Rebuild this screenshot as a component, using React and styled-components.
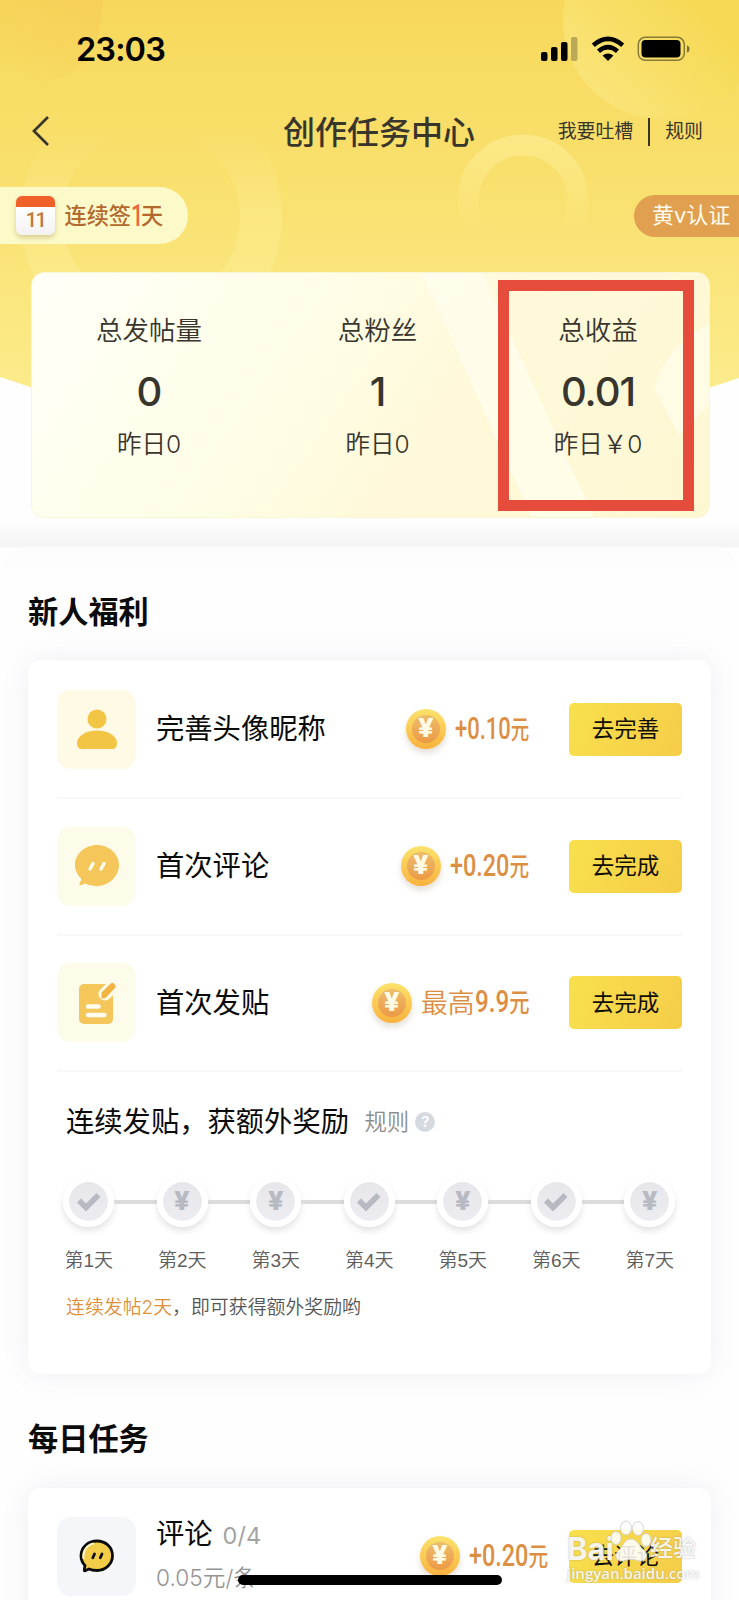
import React from "react";
import styled, { createGlobalStyle } from "styled-components";

const GlobalStyle = createGlobalStyle`
  * {
    box-sizing: border-box;
  }
  body {
    margin: 0;
    background: #fefefe;
    font-family: Inter, "Noto Sans CJK SC", sans-serif;
    color: #0b0b0b;
  }
`;

const Page = styled.div`
  position: relative;
  width: 739px;
  height: 1600px;
  overflow: hidden;
`;

const Header = styled.header`
  position: relative;
  height: 518px;
`;

const Backdrop = styled.svg`
  position: absolute;
  top: 0;
  left: 0;
  z-index: -1;
`;

const StatusBar = styled.div`
  display: flex;
  align-items: center;
  justify-content: space-between;
  height: 98px;
  padding: 0 49px 0 76px;
`;

const Time = styled.span`
  font-size: 32.5px;
  font-weight: 600;
  letter-spacing: -0.9px;
  color: #000;
`;

const NavBar = styled.nav`
  display: grid;
  grid-template-columns: 251px 192px 1fr;
  align-items: center;
  height: 66px;
  padding: 0 36px 0 32px;
  color: #38352b;
`;

const Title = styled.h1`
  margin: 3px 0 0;
  font-size: 32px;
  font-weight: 500;
  line-height: 40px;
  white-space: nowrap;
`;

const NavLinks = styled.div`
  display: flex;
  align-items: center;
  justify-content: flex-end;
  padding-top: 1px;
  font-size: 18.9px;
  line-height: 28px;
`;

const Divider = styled.span`
  width: 2px;
  height: 28px;
  margin: 0 15px;
  background: #38352b;
`;

const Pills = styled.div`
  display: flex;
  align-items: center;
  justify-content: space-between;
  height: 57px;
  margin-top: 23px;
`;

const SignPill = styled.div`
  display: flex;
  align-items: center;
  gap: 9.5px;
  width: 187.5px;
  height: 57px;
  padding-left: 16px;
  border-radius: 0 29px 29px 0;
  background: #fdfac9;
  color: #b3682e;
  font-size: 22.2px;
  font-weight: 500;
  white-space: nowrap;
`;

const SignText = styled.span`
  display: flex;
  align-items: center;
  line-height: 30px;
`;

const SignCount = styled.b`
  width: 10px;
  font-family: Roboto, sans-serif;
  font-size: 31px;
  font-weight: 500;
  color: #e8693f;
  transform: scaleX(0.7);
  transform-origin: left;
`;

const Calendar = styled.div`
  width: 39px;
  height: 39px;
  border-radius: 6px;
  border-top: 11px solid #ef6129;
  background: linear-gradient(#fff, #f4f1f1);
  box-shadow: 0 3px 5px rgba(150, 130, 40, 0.35);
  color: #c07a35;
  font-family: Roboto, sans-serif;
  font-size: 20px;
  font-weight: 500;
  line-height: 26px;
  letter-spacing: -1.5px;
  text-align: center;
`;

const VerifyPill = styled.div`
  width: 105px;
  height: 42px;
  padding-left: 18px;
  border-radius: 21px 0 0 21px;
  background: #e1a04f;
  color: #fffdf0;
  font-size: 22px;
  line-height: 41px;
  white-space: nowrap;
`;

const StatsCard = styled.section`
  position: relative;
  display: grid;
  grid-template-columns: 234px 223px 218px;
  width: 679px;
  height: 246px;
  margin: 28px 0 0 31px;
  overflow: hidden;
  border: 1px solid #fbf5d4;
  border-radius: 13px;
  background: linear-gradient(125deg, #fffff8 0%, #fffeea 32%, #fef9da 60%, #fdf7d2 100%);
`;

const Shine = styled.svg`
  position: absolute;
  top: 0;
  left: 0;
`;

const Stat = styled.div`
  position: relative;
  display: flex;
  flex-direction: column;
  align-items: center;
  padding-top: 38px;
  color: #38352d;
`;

const StatLabel = styled.span`
  font-size: 26.5px;
  font-weight: 350;
  line-height: 38px;
`;

const StatValue = styled.span`
  margin-top: 16px;
  font-size: 40px;
  font-weight: 500;
  line-height: 54px;
  letter-spacing: -1px;
`;

const StatNote = styled.span`
  margin-top: 7px;
  font-size: 24.5px;
  font-weight: 350;
  line-height: 36px;
`;

const Highlight = styled.div`
  position: absolute;
  top: 280px;
  left: 498px;
  width: 196px;
  height: 231px;
  border: 11.5px solid #e64c3b;
`;

const Body = styled.main`
  margin: 0 4px;
  padding: 0 24px;
`;

const Lip = styled.div`
  height: 64px;
  margin: 0 -28px;
  padding-top: 29px;
  background: linear-gradient(#fff, #f4f4f4 29px, #fff 30px);
`;

const LipEdge = styled.div`
  height: 35px;
  border-radius: 26px 26px 0 0;
  background: linear-gradient(#fcfcfc, #fefefe);
`;

const SectionTitle = styled.h2`
  margin: ${(props) => props.$top}px 0 0;
  font-size: 30.2px;
  font-weight: 700;
  line-height: 44px;
  color: #0b0b0b;
`;

const Card = styled.section`
  width: 683px;
  height: ${(props) => props.$height}px;
  margin-top: ${(props) => props.$top}px;
  padding: ${(props) => props.$pad || 0}px 29px 0;
  border-radius: 13px;
  background: #fff;
  box-shadow: 0 0 28px rgba(80, 85, 130, 0.09);
`;

const TaskRow = styled.div`
  display: flex;
  align-items: center;
  height: ${(props) => props.$height || 136.8}px;
  border-bottom: ${(props) => (props.$last ? "none" : "2px solid #f8f8fa")};
`;

const IconBox = styled.div`
  display: flex;
  align-items: center;
  justify-content: center;
  width: 79px;
  height: 79px;
  flex: none;
  border-radius: 14px;
  background: ${(props) => props.$bg};
`;

const TaskInfo = styled.div`
  flex: 1;
  margin-left: 20px;
  white-space: nowrap;
`;

const TaskName = styled.div`
  font-size: 28.3px;
  line-height: 42px;
`;

const Progress = styled.span`
  margin-left: 10px;
  font-size: 23.5px;
  color: #a3a3a3;
`;

const TaskRate = styled.div`
  font-size: 22.7px;
  font-weight: 350;
  line-height: 42px;
  color: #959595;
`;

const Reward = styled.div`
  display: flex;
  align-items: center;
  margin-right: ${(props) => props.$gap}px;
  color: #dc8f43;
  line-height: 40px;
`;

const CoinFace = styled.span`
  display: flex;
  align-items: center;
  justify-content: center;
  width: 40px;
  height: 40px;
  margin-right: 9px;
  flex: none;
  border: 6px solid transparent;
  border-radius: 50%;
  background: linear-gradient(#edbd6c, #ec9a45) padding-box,
    linear-gradient(#fbe36c, #fac852 55%, #f8b13e) border-box;
  box-shadow: 0 4px 6px rgba(120, 90, 50, 0.2);
  color: #fffbe6;
`;

const Yen = styled.span`
  font-family: Roboto, sans-serif;
  font-size: 25px;
  font-weight: 900;
  line-height: 28px;
  transform: scaleX(1.12);
`;

const RewardPrefix = styled.span`
  font-size: 26.8px;
  font-weight: 350;
`;

const Amount = styled.span`
  width: ${(props) => props.$width}px;
  font-family: Roboto, "Noto Sans CJK SC", sans-serif;
  font-size: 31px;
  font-weight: 500;
  white-space: nowrap;

  span {
    display: inline-block;
    transform: scaleX(${(props) => props.$squeeze});
    transform-origin: left;
  }
  small {
    font-size: 26px;
  }
`;

const GoButton = styled.button`
  width: 113px;
  height: 53px;
  padding: 0;
  flex: none;
  border: none;
  border-radius: 5px;
  background: linear-gradient(110deg, #f8e04c, #f6cd49);
  color: #0f0d05;
  font-family: inherit;
  font-size: 22.5px;
  line-height: 52px;
`;

const StreakTitle = styled.div`
  display: flex;
  align-items: center;
  margin: 29px 0 0 9px;
  font-size: 28.3px;
  line-height: 42px;
  white-space: nowrap;
`;

const Rules = styled.span`
  margin-left: 15.5px;
  font-size: 22.4px;
  font-weight: 350;
  color: #8d8d8d;
`;

const Help = styled.span`
  width: 20px;
  height: 20px;
  margin-left: 6px;
  border-radius: 50%;
  background: #d5dae0;
  color: #fff;
  font-size: 15px;
  font-weight: 600;
  line-height: 20px;
  text-align: center;
`;

const Track = styled.div`
  display: flex;
  align-items: center;
  margin: 33px 0 0 6px;
`;

const Step = styled.span`
  display: flex;
  align-items: center;
  justify-content: center;
  width: 51px;
  height: 51px;
  flex: none;
  border: 6px solid #fff;
  border-radius: 50%;
  background: linear-gradient(#e6e6eb, #ececf1);
  background-clip: padding-box;
  box-shadow: 0 4px 6px rgba(60, 60, 70, 0.14);
  color: #b7b9c3;
`;

const Link = styled.span`
  width: 42.5px;
  height: 4px;
  background: #dcdcdc;
`;

const Days = styled.div`
  display: grid;
  grid-template-columns: repeat(7, 93.5px);
  margin: 19px 0 0 -15px;
  font-family: "Liberation Sans", "Noto Sans CJK SC", sans-serif;
  font-size: 19px;
  font-weight: 350;
  line-height: 30px;
  color: #5f5f5f;
  text-align: center;
`;

const Hint = styled.p`
  margin: 17px 0 0 9px;
  font-size: 18.9px;
  font-weight: 350;
  line-height: 30px;
  color: #555;

  em {
    font-style: normal;
    color: #dc9138;
  }
`;

const HomeBar = styled.div`
  position: absolute;
  top: 1575px;
  left: 238px;
  width: 264px;
  height: 10px;
  border-radius: 5px;
  background: #000;
`;

const Watermark = styled.div`
  position: absolute;
  top: 1518px;
  left: 567px;
  width: 135px;
  color: rgba(255, 255, 255, 0.88);
  text-shadow: 0 0 2px rgba(130, 130, 130, 0.6);
  white-space: nowrap;
`;

const Brand = styled.div`
  display: flex;
  align-items: flex-end;
  height: 46px;
  font-size: 31px;
  font-weight: 700;
  line-height: 31px;

  svg {
    margin: 0 -2px 1px -4px;
  }
  small {
    font-size: 23px;
    font-weight: 500;
  }
`;

const Site = styled.div`
  margin-top: -1px;
  font-family: "Open Sans", sans-serif;
  font-size: 15px;
  font-weight: 600;
  line-height: 20px;
`;

const rookieTasks = [
  { name: "完善头像昵称", icon: UserIcon, bg: "#fffae6", amount: "+0.10", width: 75, squeeze: 0.71, action: "去完善" },
  { name: "首次评论", icon: ChatIcon, bg: "#fdfbe9", amount: "+0.20", width: 80, squeeze: 0.755, action: "去完成" },
  {
    name: "首次发贴",
    icon: NoteIcon,
    bg: "#fdfbe9",
    prefix: "最高",
    amount: "9.9",
    width: 55,
    squeeze: 0.78,
    action: "去完成",
  },
];

const steps = ["check", "yen", "yen", "check", "yen", "check", "yen"];

function UserIcon() {
  return (
    <svg width="42" height="42" viewBox="0 0 42 42" fill="#f3c544">
      <circle cx="21" cy="11" r="9.5" />
      <path d="M1 35C1 28 10 22.5 21 22.5S41 28 41 35Q41 41 36 41H6Q1 41 1 35Z" />
    </svg>
  );
}

function ChatIcon() {
  return (
    <svg width="46" height="44" viewBox="0 0 46 44">
      <path
        d="M23 1C35 1 45 10 45 21S35 42 23 42C18 42 14 41 11 39.5L6 41.5Q5 42 5.500 40L7.500 35C3.500 31 1 26.500 1 21C1 10 11 1 23 1Z"
        fill="#f5c65a"
      />
      <path d="M19 19.500L16 25M30 19.500L27 25" stroke="#fffdf0" strokeWidth="3.400" strokeLinecap="round" />
    </svg>
  );
}

function NoteIcon() {
  return (
    <svg width="40" height="44" viewBox="0 0 40 44">
      <rect x="2" y="3" width="34" height="40" rx="5" fill="#f5c65a" />
      <path d="M28 13L37 4" stroke="#fdfbe9" strokeWidth="13" strokeLinecap="round" />
      <path d="M24.500 17.500V11.500L34 2.300Q35.300 1.200 36.500 2.300L38.300 4.200Q39.500 5.500 38.200 6.800L29.500 16Q28 17.500 26 17.500Z" fill="#f0b443" />
      <path d="M11 25.500H21.500M11 34H27.500" stroke="#fffdf0" strokeWidth="4.500" strokeLinecap="round" />
    </svg>
  );
}

function DailyChatIcon() {
  return (
    <svg width="36" height="34" viewBox="0 0 36 34">
      <path
        d="M18 2C27 2 33.500 8.500 33.500 16.500S27 31.500 18 31.500C14.500 31.500 12 31 10 30L6 31.800Q5 32 5.300 30.500L6 26.500C3.500 24 2 20.500 2 16.500C2 8.500 9 2 18 2Z"
        fill="#f3cd48"
        stroke="#0b0b0b"
        strokeWidth="2.800"
        strokeLinejoin="round"
      />
      <path d="M4.500 20C3.500 11 9 5 15 4.500" stroke="#fff6cf" strokeWidth="2" fill="none" />
      <path d="M15.500 15L13.800 18.800M23 15L21.300 18.800" stroke="#0b0b0b" strokeWidth="2.800" strokeLinecap="round" />
    </svg>
  );
}

function StatusIcons() {
  return (
    <svg width="149" height="26" viewBox="0 0 149 26">
      <rect x="0" y="16" width="6.500" height="9" rx="2" />
      <rect x="10" y="11" width="6.500" height="14" rx="2" />
      <rect x="20" y="6" width="6.500" height="19" rx="2" />
      <rect x="30" y="1" width="6.500" height="24" rx="2" opacity="0.25" />
      <g fill="none" stroke="#000" strokeWidth="4.600">
        <path d="M52.300 9.200Q67 -3.300 81.700 9.200" />
        <path d="M57.500 15.200Q67 7 76.500 15.200" />
      </g>
      <path d="M61.500 19.500Q67 15.500 72.500 19.500L67 25Z" />
      <rect x="97.300" y="1.300" width="46" height="23" rx="7" fill="none" stroke="#000" strokeOpacity="0.450" strokeWidth="1.500" />
      <rect x="100.500" y="4" width="39" height="17.500" rx="4" />
      <path d="M146 9.500Q148.500 10 148.500 13T146 16.500Z" opacity="0.500" />
    </svg>
  );
}

function CalendarBadge() {
  return <Calendar>11</Calendar>;
}

function Coin() {
  return (
    <CoinFace>
      <Yen>¥</Yen>
    </CoinFace>
  );
}

function RewardAmount({ value, width, squeeze }) {
  return (
    <Amount $width={width} $squeeze={squeeze}>
      <span>
        {value}
        <small>元</small>
      </span>
    </Amount>
  );
}

function HeaderArt() {
  return (
    <Backdrop width="739" height="420" viewBox="0 0 739 420">
      <defs>
        <linearGradient id="sky" x1="0" y1="0" x2="0" y2="1">
          <stop offset="0" stopColor="#f7d85b" />
          <stop offset="0.4" stopColor="#f9e06d" />
          <stop offset="1" stopColor="#fcee93" />
        </linearGradient>
        <linearGradient id="orb" x1="0.1" y1="0.9" x2="0.7" y2="0.4">
          <stop offset="0" stopColor="#fbe883" />
          <stop offset="1" stopColor="#f6d850" />
        </linearGradient>
        <linearGradient id="glow" x1="1" y1="0" x2="0.3" y2="1">
          <stop offset="0" stopColor="#f6cc57" />
          <stop offset="1" stopColor="#f6cc57" stopOpacity="0" />
        </linearGradient>
        <linearGradient id="ring" x1="0" y1="0" x2="0" y2="1">
          <stop offset="0" stopColor="#fff5a8" stopOpacity="0.45" />
          <stop offset="0.8" stopColor="#fff5a8" stopOpacity="0" />
        </linearGradient>
        <linearGradient id="bigRing" x1="0" y1="0" x2="0" y2="1">
          <stop offset="0.1" stopColor="#fff3a5" stopOpacity="0" />
          <stop offset="0.5" stopColor="#fff3a5" stopOpacity="0.3" />
        </linearGradient>
      </defs>
      <path d="M0 0H739V378Q560 440 370 440T0 377Z" fill="url(#sky)" />
      <path d="M0 0H103C103 45 80 82 40 82Q18 82 0 70Z" fill="url(#glow)" opacity="0.7" />
      <circle cx="662" cy="20" r="99" fill="url(#orb)" opacity="0.75" />
      <circle cx="523" cy="200" r="55" fill="none" stroke="url(#ring)" strokeWidth="21" />
      <circle cx="151" cy="217" r="110" fill="none" stroke="url(#bigRing)" strokeWidth="42" />
    </Backdrop>
  );
}

export default function App() {
  return (
    <Page>
      <GlobalStyle />
      <Header>
        <HeaderArt />
        <StatusBar>
          <Time>23:03</Time>
          <StatusIcons />
        </StatusBar>
        <NavBar>
          <svg width="18" height="32" viewBox="0 0 18 32" fill="none">
            <path d="M16 2L2 16L16 30" stroke="#38352b" strokeWidth="2.700" />
          </svg>
          <Title>创作任务中心</Title>
          <NavLinks>
            我要吐槽
            <Divider />
            规则
          </NavLinks>
        </NavBar>
        <Pills>
          <SignPill>
            <CalendarBadge />
            <SignText>
              连续签<SignCount>1</SignCount>天
            </SignText>
          </SignPill>
          <VerifyPill>黄v认证</VerifyPill>
        </Pills>
        <StatsCard>
          <Shine width="679" height="246" viewBox="0 0 679 246">
            <path d="M390 0H450L563 246H500Z" fill="#fffef0" opacity="0.7" />
            <path d="M679 50Q635 70 622 115L647 163L679 130Z" fill="#fffff5" opacity="0.5" />
          </Shine>
          <Stat>
            <StatLabel>总发帖量</StatLabel>
            <StatValue>0</StatValue>
            <StatNote>昨日0</StatNote>
          </Stat>
          <Stat>
            <StatLabel>总粉丝</StatLabel>
            <StatValue>1</StatValue>
            <StatNote>昨日0</StatNote>
          </Stat>
          <Stat>
            <StatLabel>总收益</StatLabel>
            <StatValue>0.01</StatValue>
            <StatNote>昨日￥0</StatNote>
          </Stat>
        </StatsCard>
        <Highlight />
      </Header>

      <Body>
        <Lip>
          <LipEdge />
        </Lip>
        <SectionTitle $top={8}>新人福利</SectionTitle>
        <Card $height={714} $top={26} $pad={2}>
          {rookieTasks.map((task) => (
            <TaskRow key={task.name}>
              <IconBox $bg={task.bg}>
                <task.icon />
              </IconBox>
              <TaskInfo>
                <TaskName>{task.name}</TaskName>
              </TaskInfo>
              <Reward $gap={39.5}>
                <Coin />
                {task.prefix && <RewardPrefix>{task.prefix}</RewardPrefix>}
                <RewardAmount value={task.amount} width={task.width} squeeze={task.squeeze} />
              </Reward>
              <GoButton>{task.action}</GoButton>
            </TaskRow>
          ))}
          <StreakTitle>
            连续发贴，获额外奖励
            <Rules>规则</Rules>
            <Help>?</Help>
          </StreakTitle>
          <Track>
            {steps.map((kind, i) => (
              <React.Fragment key={i}>
                {i > 0 && <Link />}
                <Step>
                  {kind === "yen" ? (
                    <Yen>¥</Yen>
                  ) : (
                    <svg width="24" height="20" viewBox="0 0 24 20" fill="none">
                      <path d="M2 8.500L9 15.500L21.500 3" stroke="#b7b9c3" strokeWidth="5.800" />
                    </svg>
                  )}
                </Step>
              </React.Fragment>
            ))}
          </Track>
          <Days>
            {steps.map((_, i) => (
              <span key={i}>第{i + 1}天</span>
            ))}
          </Days>
          <Hint>
            <em>连续发帖2天</em>，即可获得额外奖励哟
          </Hint>
        </Card>

        <SectionTitle $top={43}>每日任务</SectionTitle>
        <Card $height={300} $top={27}>
          <TaskRow $height={136} $last>
            <IconBox $bg="#f5f6f9">
              <DailyChatIcon />
            </IconBox>
            <TaskInfo>
              <TaskName>
                评论<Progress>0/4</Progress>
              </TaskName>
              <TaskRate>0.05元/条</TaskRate>
            </TaskInfo>
            <Reward $gap={20.5}>
              <Coin />
              <RewardAmount value="+0.20" width={79.5} squeeze={0.755} />
            </Reward>
            <GoButton>去评论</GoButton>
          </TaskRow>
        </Card>
      </Body>

      <HomeBar />
      <Watermark>
        <Brand>
          Bai
          <svg width="42" height="43" viewBox="0 0 42 43" fill="#fff" fillOpacity="0.88" stroke="#ccc" strokeWidth="0.8">
            <ellipse cx="16" cy="8" rx="5.500" ry="7" />
            <ellipse cx="28" cy="8.500" rx="5.500" ry="7" />
            <ellipse cx="6" cy="18" rx="5" ry="6.500" />
            <ellipse cx="36" cy="20" rx="5" ry="6.500" />
            <path d="M21 19C28 19 29 27 35 31C39 36 35 42 29 41C24 39 18 39 13 41C6 42 4 35 8 31C13 27 14 19 21 19Z" />
          </svg>
          <small>经验</small>
        </Brand>
        <Site>jingyan.baidu.com</Site>
      </Watermark>
    </Page>
  );
}
